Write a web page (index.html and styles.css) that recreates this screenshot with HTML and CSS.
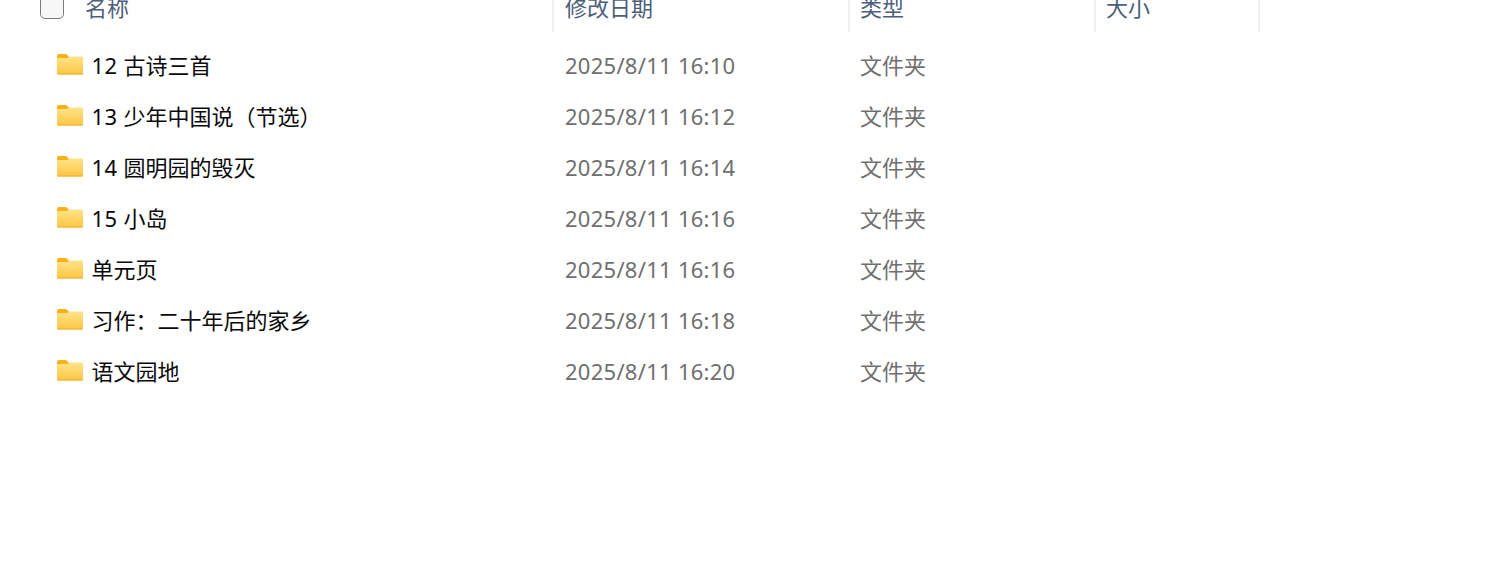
FILE: index.html
```html
<!DOCTYPE html>
<html lang="zh-CN">
<head>
<meta charset="utf-8">
<title>文件列表</title>
<link rel="stylesheet" href="styles.css">
</head>
<body>
<svg class="defs" width="0" height="0" aria-hidden="true">
  <defs>
    <linearGradient id="fg" x1="0" y1="0" x2="0" y2="1">
      <stop offset="0" stop-color="#ffe48a"/>
      <stop offset="1" stop-color="#fdc541"/>
    </linearGradient>
    <symbol id="folder" viewBox="0 0 26 21">
      <path d="M0 2a2 2 0 0 1 2-2h6.500a2 2 0 0 1 1.400.6L12 3v3H0z" fill="#fbb018"/>
      <path d="M0 5a1 1 0 0 1 1-1h9.500L12.500 2.500H25a1 1 0 0 1 1 1V19.500a1 1 0 0 1-1 1H1a1 1 0 0 1-1-1z" fill="url(#fg)"/>
      <path d="M0 19.500h26a1 1 0 0 1-1 1H1a1 1 0 0 1-1-1z" fill="#f2b033"/>
    </symbol>
  </defs>
</svg>
<div class="header">
  <div class="hcell col-name"><span class="check"></span><span class="htext">名称</span></div>
  <div class="hcell col-date"><span class="htext">修改日期</span></div>
  <div class="hcell col-type"><span class="htext">类型</span></div>
  <div class="hcell col-size"><span class="htext">大小</span></div>
</div>
<div class="list">
  <div class="row"><div class="name"><svg class="icon"><use href="#folder"/></svg><span><span class="num">12 </span>古诗三首</span></div><div class="date">2025/8/11 16:10</div><div class="type">文件夹</div></div>
  <div class="row"><div class="name"><svg class="icon"><use href="#folder"/></svg><span><span class="num">13 </span>少年中国说（节选）</span></div><div class="date">2025/8/11 16:12</div><div class="type">文件夹</div></div>
  <div class="row"><div class="name"><svg class="icon"><use href="#folder"/></svg><span><span class="num">14 </span>圆明园的毁灭</span></div><div class="date">2025/8/11 16:14</div><div class="type">文件夹</div></div>
  <div class="row"><div class="name"><svg class="icon"><use href="#folder"/></svg><span><span class="num">15 </span>小岛</span></div><div class="date">2025/8/11 16:16</div><div class="type">文件夹</div></div>
  <div class="row"><div class="name"><svg class="icon"><use href="#folder"/></svg><span>单元页</span></div><div class="date">2025/8/11 16:16</div><div class="type">文件夹</div></div>
  <div class="row"><div class="name"><svg class="icon"><use href="#folder"/></svg><span>习作：二十年后的家乡</span></div><div class="date">2025/8/11 16:18</div><div class="type">文件夹</div></div>
  <div class="row"><div class="name"><svg class="icon"><use href="#folder"/></svg><span>语文园地</span></div><div class="date">2025/8/11 16:20</div><div class="type">文件夹</div></div>
</div>
</body>
</html>
```

FILE: styles.css
```css
html, body {
  margin: 0;
  padding: 0;
  background: #fff;
  height: 100%;
  overflow: hidden;
}
body {
  font-family: "Noto Sans", "Noto Sans CJK SC", sans-serif;
  font-size: 22px;
}
.defs { display: block; height: 0; }
.header {
  display: flex;
  height: 32px;
  overflow: hidden;
  color: #4c607a;
}
.hcell {
  display: flex;
  align-items: flex-start;
  box-sizing: border-box;
  height: 32px;
  border-right: 2px solid #f0f0f0;
  line-height: 14px;
}
.col-name { width: 554px; padding-left: 40px; }
.col-date { width: 296px; padding-left: 11px; }
.col-type { width: 246px; padding-left: 10px; }
.col-size { width: 164px; padding-left: 10px; }
.check {
  flex: none;
  width: 24px;
  height: 24px;
  margin-top: -5px;
  box-sizing: border-box;
  border: 1.5px solid #7b7b7b;
  border-radius: 5px;
  background: #f7f7f7;
}
.htext { display: block; }
.col-name .htext { margin-left: 21px; }
.list { padding-top: 8px; }
.row {
  display: flex;
  align-items: center;
  height: 51px;
  line-height: 51px;
}
.name {
  display: flex;
  align-items: center;
  width: 554px;
  padding-left: 57px;
  box-sizing: border-box;
  color: #0a0a0a;
}
.num { letter-spacing: 0.4px; }
.icon {
  flex: none;
  width: 26px;
  height: 21px;
  margin-right: 8.500px;
  margin-top: -2px;
}
.date {
  width: 296px;
  padding-left: 11px;
  box-sizing: border-box;
  color: #6f6f6f;
  letter-spacing: 0.27px;
}
.type {
  padding-left: 10px;
  color: #6f6f6f;
}
```
